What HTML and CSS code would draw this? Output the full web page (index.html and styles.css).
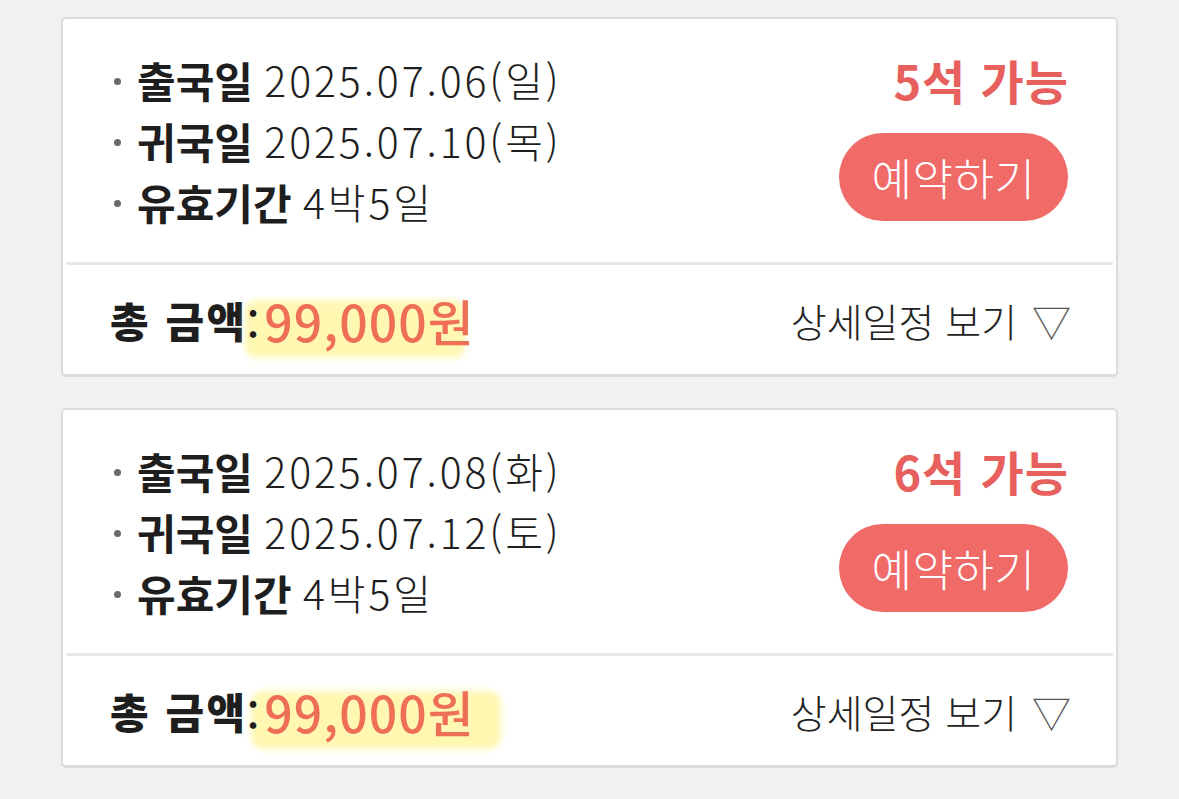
FILE: index.html
```html
<!DOCTYPE html>
<html lang="ko">
<head>
<meta charset="utf-8">
<link rel="stylesheet" href="styles.css">
</head>
<body>
<div class="list">
  <div class="card">
    <div class="card-top">
      <ul class="info">
        <li><b>출국일</b> 2025.07.06(일)</li>
        <li><b>귀국일</b> 2025.07.10(목)</li>
        <li><b>유효기간</b> 4박5일</li>
      </ul>
      <div class="side">
        <div class="seats">5석 가능</div>
        <button class="book">예약하기</button>
      </div>
    </div>
    <div class="card-foot">
      <div class="total"><b class="label">총 금액</b><span class="hl"><span class="colon">:</span><span class="price">99,000원</span></span></div>
      <div class="detail">상세일정 보기 <span class="tri">▽</span></div>
    </div>
  </div>
  <div class="card">
    <div class="card-top">
      <ul class="info">
        <li><b>출국일</b> 2025.07.08(화)</li>
        <li><b>귀국일</b> 2025.07.12(토)</li>
        <li><b>유효기간</b> 4박5일</li>
      </ul>
      <div class="side">
        <div class="seats">6석 가능</div>
        <button class="book">예약하기</button>
      </div>
    </div>
    <div class="card-foot">
      <div class="total"><b class="label">총 금액</b><span class="hl hl2"><span class="colon">:</span><span class="price">99,000원</span></span></div>
      <div class="detail">상세일정 보기 <span class="tri">▽</span></div>
    </div>
  </div>
  <div class="card"></div>
</div>
</body>
</html>
```
FILE: styles.css
```css
html, body {
  margin: 0;
  padding: 0;
  background: #f1f1f1;
  font-family: "Noto Sans CJK KR", "Noto Sans", sans-serif;
  color: #1e1e1e;
}
.list {
  display: flex;
  flex-direction: column;
  gap: 31px;
  padding: 17px 61px 0 61px;
}
.card {
  background: #fff;
  border: 2px solid #dcdcdc;
  border-bottom-width: 3px;
  border-radius: 5px;
  min-height: 200px;
}
.card-top {
  display: flex;
  justify-content: space-between;
  padding: 30px 45px 30px 48px;
  border-bottom: 3px solid #e8e8e8;
  margin: 0 3px;
}
.info {
  list-style: none;
  margin: 0;
  padding: 0;
}
.info li {
  font-size: 41px;
  line-height: 61px;
  height: 61px;
  font-weight: 300;
  display: flex;
  align-items: center;
  white-space: pre;
  letter-spacing: 2.9px;
}
.info li::before {
  content: "";
  width: 7px;
  height: 7px;
  border-radius: 50%;
  background: #6a6a6a;
  margin-right: 16px;
  margin-top: 4px;
}
.info li b {
  font-weight: 700;
  font-size: 42px;
  letter-spacing: 0;
  margin-right: -3px;
}
.side {
  display: flex;
  flex-direction: column;
  align-items: flex-end;
}
.seats {
  color: #e8605e;
  font-size: 47px;
  font-weight: 700;
  line-height: 52px;
  margin-top: 5px;
  letter-spacing: 1px;
  margin-right: -1px;
}
.book {
  margin-top: 27px;
  width: 229px;
  height: 88px;
  border: none;
  border-radius: 44px;
  background: #f06a68;
  color: #fff;
  font-family: inherit;
  font-size: 44px;
  font-weight: 300;
  padding: 0;
  letter-spacing: 0.5px;
}
.card-foot {
  display: flex;
  justify-content: space-between;
  align-items: center;
  height: 109px;
  padding: 0 45px 0 47px;
}
.total {
  font-size: 42px;
  font-weight: 700;
  display: flex;
  align-items: center;
  line-height: 60px;
}
.label {
  letter-spacing: 2.5px;
}
.hl {
  position: relative;
  display: flex;
  align-items: center;
  height: 60px;
  margin-left: -1px;
}
.hl::before {
  content: "";
  position: absolute;
  left: -2px;
  right: 10px;
  top: 10px;
  bottom: -8px;
  background: #fff7b2;
  border-radius: 12px;
  filter: blur(3px);
  z-index: 0;
}
.hl2::before {
  left: 4px;
  right: -26px;
}
.colon {
  position: relative;
  z-index: 1;
  font-weight: 500;
  margin-right: 5px;
  margin-top: 6px;
  color: #1e1e1e;
}
.price {
  position: relative;
  z-index: 1;
  color: #ee6f55;
  font-size: 50px;
  font-weight: 500;
  letter-spacing: 1px;
}
.detail {
  font-size: 39px;
  font-weight: 300;
  color: #222;
}
.tri {
  color: #555;
  margin-left: 4px;
}
```
